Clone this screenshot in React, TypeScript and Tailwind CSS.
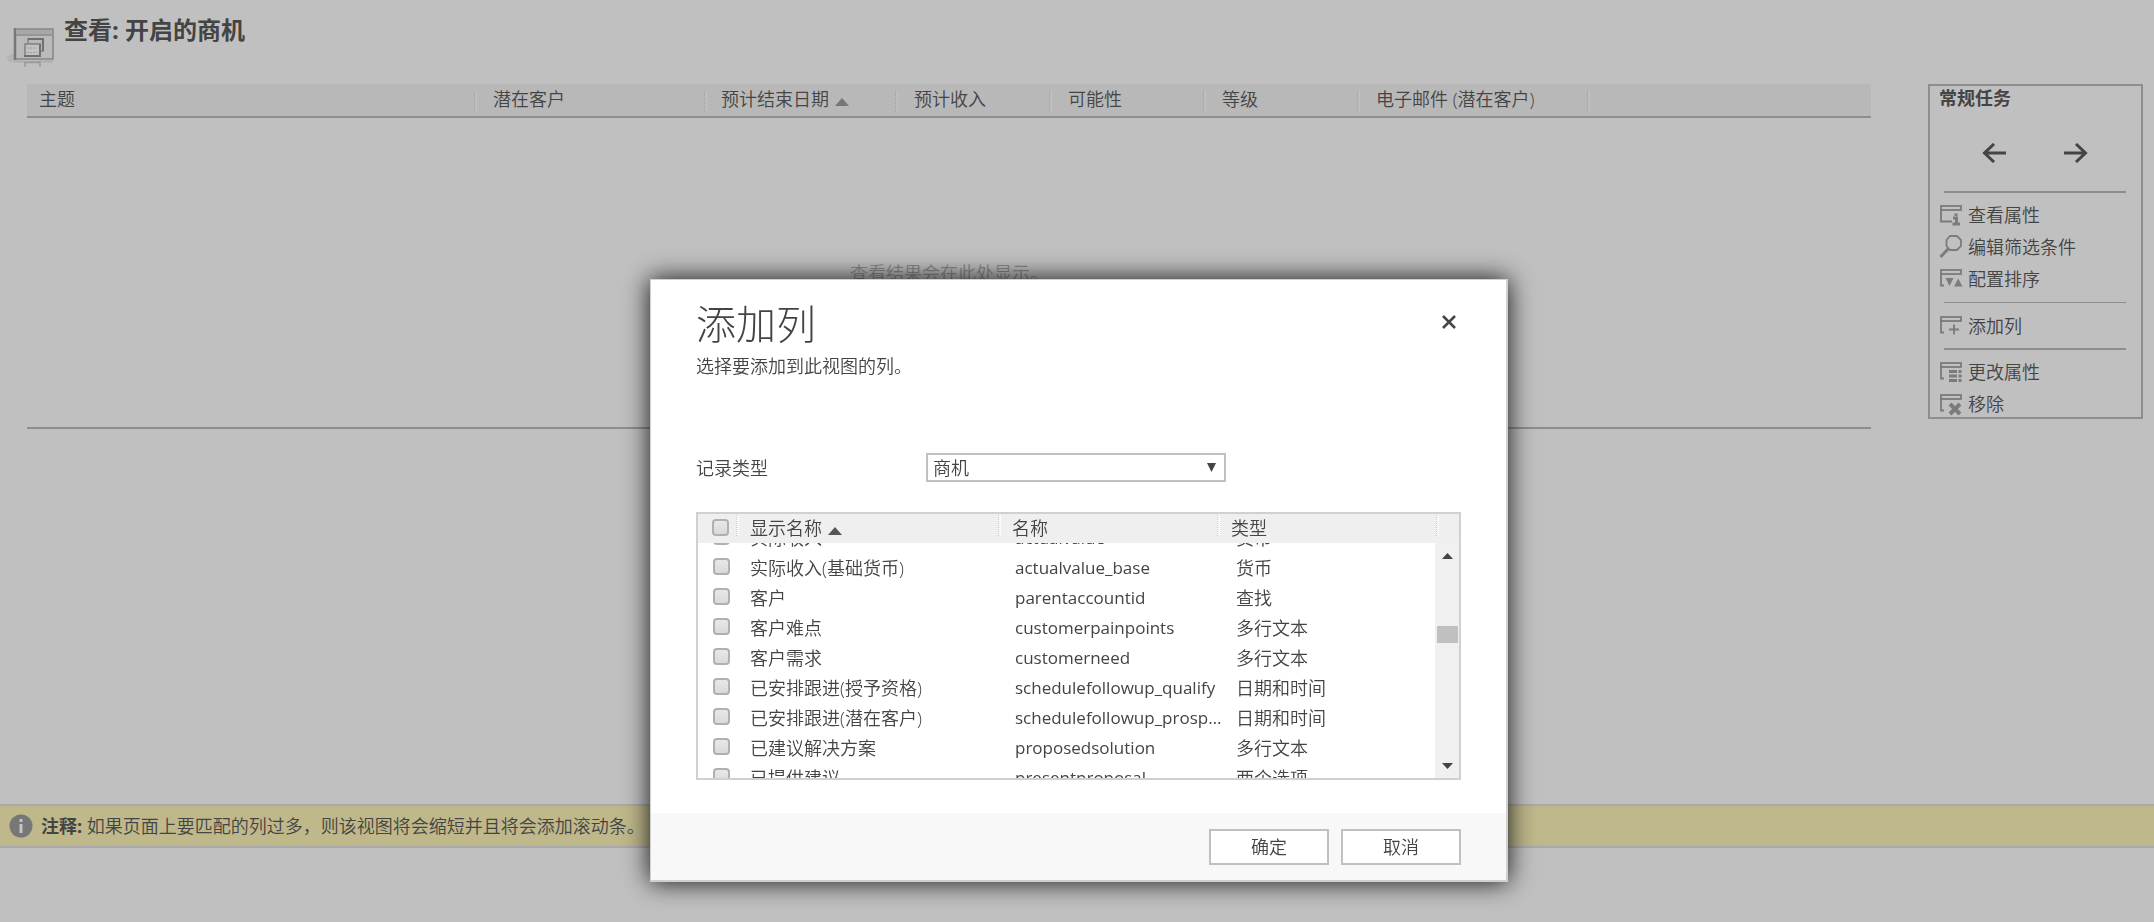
import React, { useState } from 'react';
import clsx from 'clsx';

interface AttributeRow {
    label: string;
    name: string;
    type: string;
}

const gridColumns = [
    { label: '主题', width: 'w-[450px]', pad: 'pl-3' },
    { label: '潜在客户', width: 'w-[230px]', pad: 'pl-4' },
    { label: '预计结束日期', width: 'w-[191px]', pad: 'pl-[14px]', sorted: true },
    { label: '预计收入', width: 'w-[154px]', pad: 'pl-4' },
    { label: '可能性', width: 'w-[154px]', pad: 'pl-4' },
    { label: '等级', width: 'w-[154px]', pad: 'pl-4' },
    { label: '电子邮件 (潜在客户)', width: 'w-[230px]', pad: 'pl-4' },
];

const attributes: AttributeRow[] = [
    { label: '实际收入', name: 'actualvalue', type: '货币' },
    { label: '实际收入(基础货币)', name: 'actualvalue_base', type: '货币' },
    { label: '客户', name: 'parentaccountid', type: '查找' },
    { label: '客户难点', name: 'customerpainpoints', type: '多行文本' },
    { label: '客户需求', name: 'customerneed', type: '多行文本' },
    { label: '已安排跟进(授予资格)', name: 'schedulefollowup_qualify', type: '日期和时间' },
    { label: '已安排跟进(潜在客户)', name: 'schedulefollowup_prospect', type: '日期和时间' },
    { label: '已建议解决方案', name: 'proposedsolution', type: '多行文本' },
    { label: '已提供建议', name: 'presentproposal', type: '两个选项' },
];

const ViewIcon = () => (
    <svg width="52" height="46" viewBox="0 0 52 46" className="shrink-0" fill="none">
        <path d="M0 33 L8 29 V38 H4 Z" fill="#b4b4b4" />
        <rect x="9" y="5" width="38" height="30" fill="#bababa" stroke="#858585" strokeWidth="1.5" />
        <path d="M9 4 V36" stroke="#777" strokeWidth="2.5" />
        <rect x="11" y="6" width="35" height="4" fill="#a8a8a8" />
        <path d="M10 11 H46" stroke="#8a8a8a" strokeWidth="1.5" />
        <rect x="22" y="15" width="15" height="12" fill="#b8b8b8" stroke="#858585" strokeWidth="1.5" />
        <path d="M22 15 H37 V27" stroke="#707070" strokeWidth="2" />
        <rect x="19" y="20" width="15" height="12" fill="#c2c2c2" stroke="#808080" strokeWidth="1.5" />
        <path d="M18 32 H34 V20" stroke="#707070" strokeWidth="2" />
        <path d="M21 24 H31 M21 28.500 H31" stroke="#a0a0a0" strokeDasharray="2 1" />
        <path d="M8 37.500 H47" stroke="#adadad" strokeWidth="2" />
        <path d="M19 43 V38.500 H34 V43" stroke="#999" strokeWidth="1.5" />
    </svg>
);

const TaskIcon = ({ children, short }: { children: React.ReactNode; short?: boolean }) => (
    <svg width="24" height="24" viewBox="0 0 24 24" className="shrink-0" fill="none" stroke="#7b7b7b" strokeWidth="1.8">
        <rect x="2" y="3" width="20" height="4" />
        <path d={short ? 'M2 6 V18.5 H5' : 'M2 6 V18.5 H13'} />
        {children}
    </svg>
);

const InfoTaskIcon = () => (
    <TaskIcon>
        <path d="M17 10.500 V13 M14 15 H17.500 V21 M13.500 21 H21" strokeWidth="3" />
    </TaskIcon>
);

const FilterTaskIcon = () => (
    <svg width="24" height="24" viewBox="0 0 24 24" className="shrink-0" fill="none" stroke="#7b7b7b">
        <path d="M11 1 H18 L22 5 V11 L18 15 H11 L7.500 11 V5 Z" strokeWidth="1.8" />
        <path d="M9.500 13.500 L1.500 22" strokeWidth="3" />
    </svg>
);

const SortTaskIcon = () => (
    <TaskIcon short>
        <path d="M6.500 11 H14.500 L10.500 19 Z M15 19.500 H23.500 L19.200 11.500 Z" fill="#7b7b7b" stroke="none" />
    </TaskIcon>
);

const AddTaskIcon = () => (
    <TaskIcon short>
        <path d="M10 15.500 H20 M15 10.500 V20.500" />
    </TaskIcon>
);

const PropsTaskIcon = () => (
    <TaskIcon short>
        <path d="M10 11.500 H18 M10 16 H18 M10 20.500 H18 M19.500 11.500 H22.500 M19.500 16 H22.500 M19.500 20.500 H22.500" strokeWidth="3" />
    </TaskIcon>
);

const RemoveTaskIcon = () => (
    <TaskIcon short>
        <path d="M11 12 L21 22 M21 12 L11 22" strokeWidth="4" />
    </TaskIcon>
);

const Arrow = ({ flip }: { flip?: boolean }) => (
    <svg width="25" height="20" viewBox="0 0 25 20" fill="none" stroke="#444" strokeWidth="3" className={clsx(flip && 'rotate-180')}>
        <path d="M24 10 H3 M12 1 L2.500 10 L12 19" />
    </svg>
);

const Triangle = ({ className, down }: { className: string; down?: boolean }) => (
    <svg viewBox="0 0 14 8" preserveAspectRatio="none" className={clsx('shrink-0', className)} fill="currentColor">
        <path d={down ? 'M0 0 H14 L7 8 Z' : 'M0 8 H14 L7 0 Z'} />
    </svg>
);

const TaskLink = ({ icon, label }: { icon: React.ReactNode; label: string }) => (
    <li className="h-8">
        <a href="#" className="flex h-full items-center gap-[5px]">
            {icon}
            {label}
        </a>
    </li>
);

const checkboxClass =
    'block size-[17px] appearance-none rounded-[4px] border-2 border-[#b0b0b0] bg-linear-to-b from-[#e8e8e8] to-[#dadada] checked:bg-[#777]';

const sepClass = 'absolute right-0 h-[21px] w-[3px] border-l border-dotted';

const AddColumnDialog = () => {
    const [selected, setSelected] = useState<string[]>([]);

    const toggle = (name: string) =>
        setSelected((prev) => (prev.includes(name) ? prev.filter((n) => n !== name) : [...prev, name]));

    const toggleAll = () => setSelected(selected.length === attributes.length ? [] : attributes.map((a) => a.name));

    return (
        <div
            role="dialog"
            aria-labelledby="dialog-title"
            className="w-[858px] border-t border-r-2 border-b-2 border-l border-[#d0d0d0] bg-white shadow-[0_0_24px_#111]"
        >
            <div className="px-[45px] pt-[14px]">
                <div className="flex items-start justify-between">
                    <h2 id="dialog-title" className="text-[40px] leading-[60px] font-light">添加列</h2>
                    <button aria-label="关闭" className="mt-[21px] mr-[5px]">
                        <svg width="14" height="14" viewBox="0 0 14 14" fill="none" stroke="#444" strokeWidth="2.5">
                            <path d="M1 1 L13 13 M13 1 L1 13" />
                        </svg>
                    </button>
                </div>
                <p className="leading-6">选择要添加到此视图的列。</p>

                <div className="mt-[75px] flex items-center">
                    <label htmlFor="record-type" className="w-[230px]">记录类型</label>
                    <div className="relative">
                        <select
                            id="record-type"
                            className="block h-[29px] w-[300px] appearance-none border-2 border-[#c0c0c0] bg-white pl-[5px] leading-6"
                        >
                            <option>商机</option>
                        </select>
                        <Triangle down className="pointer-events-none absolute top-[10px] right-[10px] h-[9px] w-[9px]" />
                    </div>
                </div>

                <div className="mt-[30px] border-2 border-[#d0d0d0]">
                    <table className="w-full table-fixed bg-[#efefef]">
                        <thead>
                            <tr className="h-[29px] text-left">
                                <th className="relative w-[41px] pb-[2px] pl-[14px] font-[350]">
                                    <input
                                        type="checkbox"
                                        aria-label="全选"
                                        className={checkboxClass}
                                        checked={selected.length === attributes.length}
                                        onChange={toggleAll}
                                    />
                                    <span className={clsx(sepClass, 'top-px border-[#c8c8c8] bg-linear-to-r from-[#efefef] to-white')} />
                                </th>
                                <th className="relative w-[262px] pb-[2px] pl-[11px] font-[350]">
                                    <span className="flex items-center gap-[6px]">
                                        显示名称
                                        <Triangle className="mt-[6px] h-2 w-[14px] text-[#555]" />
                                    </span>
                                    <span className={clsx(sepClass, 'top-px border-[#c8c8c8] bg-linear-to-r from-[#efefef] to-white')} />
                                </th>
                                <th className="relative w-[219px] pb-[2px] pl-[11px] font-[350]">
                                    名称
                                    <span className={clsx(sepClass, 'top-px border-[#c8c8c8] bg-linear-to-r from-[#efefef] to-white')} />
                                </th>
                                <th className="relative w-[219px] pb-[2px] pl-[11px] font-[350]">
                                    类型
                                    <span className={clsx(sepClass, 'top-px border-[#c8c8c8] bg-linear-to-r from-[#efefef] to-white')} />
                                </th>
                                <th />
                            </tr>
                        </thead>
                    </table>
                    <div className="flex h-[235px] overflow-hidden">
                        <table className="-mt-5 w-full table-fixed self-start">
                            <tbody>
                                {attributes.map((row) => (
                                    <tr key={row.name} className="h-[30px]">
                                        <td className="w-[41px] pb-1 pl-[15px]">
                                            <input
                                                type="checkbox"
                                                aria-label={row.label}
                                                className={checkboxClass}
                                                checked={selected.includes(row.name)}
                                                onChange={() => toggle(row.name)}
                                            />
                                        </td>
                                        <td className="w-[262px] pl-[11px]">{row.label}</td>
                                        <td className="w-[222px] truncate pl-[14px] text-[17px] font-normal">{row.name}</td>
                                        <td className="pl-[13px]">{row.type}</td>
                                    </tr>
                                ))}
                            </tbody>
                        </table>
                        <div className="flex w-6 shrink-0 flex-col items-center bg-[#f0f0f0] pt-[10px] pb-[9px]" aria-hidden="true">
                            <Triangle className="h-[6px] w-[11px]" />
                            <div className="mt-[67px] h-[17px] w-[21px] bg-[#c0c0c0]" />
                            <Triangle down className="mt-auto h-[6px] w-[11px]" />
                        </div>
                    </div>
                </div>
            </div>

            <div className="mt-[33px] flex h-[67px] justify-end gap-3 bg-[#f8f8f8] pt-4 pr-[45px]">
                <button className="h-9 w-[120px] border-2 border-[#c0c0c0] bg-white">确定</button>
                <button className="h-9 w-[120px] border-2 border-[#c0c0c0] bg-white">取消</button>
            </div>
        </div>
    );
};

const App: React.FC = () => {
    return (
        <div className="flex min-h-screen flex-col bg-[#c0c0c0] font-['Open_Sans','Noto_Sans_CJK_SC',sans-serif] text-[18px] leading-6 font-[350] text-[#444]">
            <header className="flex h-[84px] pt-[15px] pl-[6px]">
                <div className="pt-[9px]">
                    <ViewIcon />
                </div>
                <h1 className="ml-[6px] text-2xl leading-[30px] font-bold">查看: 开启的商机</h1>
            </header>

            <main className="flex items-start gap-[57px] pr-[11px] pl-[27px]">
                <section className="min-w-0 grow border-b-2 border-[#8e8e8e]">
                    <table className="w-full table-fixed">
                        <thead>
                            <tr className="h-[33px] border-b-2 border-[#8e8e8e] bg-[#b8b8b8] text-left">
                                {gridColumns.map((col) => (
                                    <th key={col.label} className={clsx('relative pb-[2px] font-[350]', col.width, col.pad)}>
                                        <span className="flex items-center gap-[6px]">
                                            {col.label}
                                            {col.sorted && <Triangle className="mt-[6px] h-2 w-[14px] text-[#777]" />}
                                        </span>
                                        <span className={clsx(sepClass, 'top-[7px] border-[#9c9c9c] bg-linear-to-r from-[#b8b8b8] to-[#c4c4c4]')} />
                                    </th>
                                ))}
                                <th />
                            </tr>
                        </thead>
                        <tbody>
                            <tr className="h-[310px]">
                                <td colSpan={8} className="text-center text-[#8a8a8a]">查看结果会在此处显示。</td>
                            </tr>
                        </tbody>
                    </table>
                </section>

                <aside className="w-[215px] shrink-0 border-2 border-[#8e8e8e] pl-[9px]">
                    <h2 className="font-bold">常规任务</h2>
                    <div className="mt-[33px] flex gap-14 pl-[43px]">
                        <button aria-label="左移">
                            <Arrow />
                        </button>
                        <button aria-label="右移">
                            <Arrow flip />
                        </button>
                    </div>
                    <hr className="mt-7 mr-[15px] ml-[5px] border-t-2 border-[#8e8e8e]" />
                    <ul className="mt-[6px]">
                        <TaskLink icon={<InfoTaskIcon />} label="查看属性" />
                        <TaskLink icon={<FilterTaskIcon />} label="编辑筛选条件" />
                        <TaskLink icon={<SortTaskIcon />} label="配置排序" />
                    </ul>
                    <hr className="mt-[7px] mr-[15px] ml-[5px] border-[#8e8e8e]" />
                    <ul className="mt-[7px]">
                        <TaskLink icon={<AddTaskIcon />} label="添加列" />
                    </ul>
                    <hr className="mt-[6px] mr-[15px] ml-[5px] border-t-2 border-[#8e8e8e]" />
                    <ul className="mt-[6px] -mb-[3px]">
                        <TaskLink icon={<PropsTaskIcon />} label="更改属性" />
                        <TaskLink icon={<RemoveTaskIcon />} label="移除" />
                    </ul>
                </aside>
            </main>

            <div className="mt-auto mb-[74px] flex h-11 items-center border-y-2 border-[#a9a9a9] bg-[#bfb88b] pl-[9px]">
                <svg width="24" height="24" viewBox="0 0 24 24" className="mr-2 shrink-0">
                    <circle cx="12" cy="12" r="11.500" fill="#777" />
                    <path d="M12 5 V8 M12 10 V19" stroke="#c4c4c4" strokeWidth="3" />
                </svg>
                <p>
                    <b className="font-bold">注释:</b> 如果页面上要匹配的列过多，则该视图将会缩短并且将会添加滚动条。
                </p>
            </div>

            <div className="fixed inset-0 flex items-end justify-center pb-10 pl-1">
                <AddColumnDialog />
            </div>
        </div>
    );
};

export default App;
